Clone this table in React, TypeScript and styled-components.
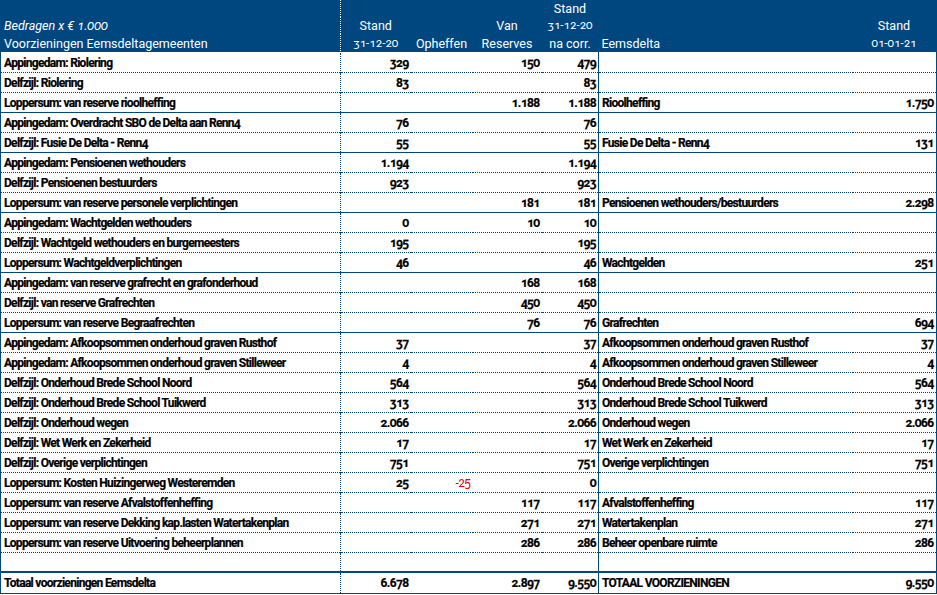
import React from 'react';
import styled, { createGlobalStyle } from 'styled-components';

const BLUE = '#00467f';

type Line = 'dot' | 'solid' | 'thick';

type Row = {
	label: string;
	stand?: string;
	opheffen?: string;
	van?: string;
	na?: string;
	eems?: string;
	eemsStand?: string;
	line: Line;
	total?: boolean;
};

const rows: Row[] = [
	{ label: 'Appingedam: Riolering', stand: '329', van: '150', na: '479', line: 'dot' },
	{ label: 'Delfzijl: Riolering', stand: '83', na: '83', line: 'dot' },
	{ label: 'Loppersum: van reserve rioolheffing', van: '1.188', na: '1.188', eems: 'Rioolheffing', eemsStand: '1.750', line: 'solid' },
	{ label: 'Appingedam: Overdracht SBO de Delta aan Renn4', stand: '76', na: '76', line: 'dot' },
	{ label: 'Delfzijl: Fusie De Delta - Renn4', stand: '55', na: '55', eems: 'Fusie De Delta - Renn4', eemsStand: '131', line: 'solid' },
	{ label: 'Appingedam: Pensioenen wethouders', stand: '1.194', na: '1.194', line: 'dot' },
	{ label: 'Delfzijl: Pensioenen bestuurders', stand: '923', na: '923', line: 'dot' },
	{ label: 'Loppersum: van reserve personele verplichtingen', van: '181', na: '181', eems: 'Pensioenen wethouders/bestuurders', eemsStand: '2.298', line: 'solid' },
	{ label: 'Appingedam: Wachtgelden wethouders', stand: '0', van: '10', na: '10', line: 'dot' },
	{ label: 'Delfzijl: Wachtgeld wethouders en burgemeesters', stand: '195', na: '195', line: 'dot' },
	{ label: 'Loppersum: Wachtgeldverplichtingen', stand: '46', na: '46', eems: 'Wachtgelden', eemsStand: '251', line: 'solid' },
	{ label: 'Appingedam: van reserve grafrecht en grafonderhoud', van: '168', na: '168', line: 'dot' },
	{ label: 'Delfzijl: van reserve Grafrechten', van: '450', na: '450', line: 'dot' },
	{ label: 'Loppersum: van reserve Begraafrechten', van: '76', na: '76', eems: 'Grafrechten', eemsStand: '694', line: 'solid' },
	{ label: 'Appingedam: Afkoopsommen onderhoud graven Rusthof', stand: '37', na: '37', eems: 'Afkoopsommen onderhoud graven Rusthof', eemsStand: '37', line: 'dot' },
	{ label: 'Appingedam: Afkoopsommen onderhoud graven Stilleweer', stand: '4', na: '4', eems: 'Afkoopsommen onderhoud graven Stilleweer', eemsStand: '4', line: 'dot' },
	{ label: 'Delfzijl: Onderhoud Brede School Noord', stand: '564', na: '564', eems: 'Onderhoud Brede School Noord', eemsStand: '564', line: 'dot' },
	{ label: 'Delfzijl: Onderhoud Brede School Tuikwerd', stand: '313', na: '313', eems: 'Onderhoud Brede School Tuikwerd', eemsStand: '313', line: 'dot' },
	{ label: 'Delfzijl: Onderhoud wegen', stand: '2.066', na: '2.066', eems: 'Onderhoud wegen', eemsStand: '2.066', line: 'dot' },
	{ label: 'Delfzijl: Wet Werk en Zekerheid', stand: '17', na: '17', eems: 'Wet Werk en Zekerheid', eemsStand: '17', line: 'dot' },
	{ label: 'Delfzijl: Overige verplichtingen', stand: '751', na: '751', eems: 'Overige verplichtingen', eemsStand: '751', line: 'dot' },
	{ label: 'Loppersum: Kosten Huizingerweg Westeremden', stand: '25', opheffen: '-25', na: '0', line: 'dot' },
	{ label: 'Loppersum: van reserve Afvalstoffenheffing', van: '117', na: '117', eems: 'Afvalstoffenheffing', eemsStand: '117', line: 'dot' },
	{ label: 'Loppersum: van reserve Dekking kap.lasten Watertakenplan', van: '271', na: '271', eems: 'Watertakenplan', eemsStand: '271', line: 'dot' },
	{ label: 'Loppersum: van reserve Uitvoering beheerplannen', van: '286', na: '286', eems: 'Beheer openbare ruimte', eemsStand: '286', line: 'dot' },
	{ label: '', line: 'thick' },
	{ label: 'Totaal voorzieningen Eemsdelta', stand: '6.678', van: '2.897', na: '9.550', eems: 'TOTAAL VOORZIENINGEN', eemsStand: '9.550', line: 'solid', total: true },
];

const lineStyle = (l: Line) =>
	l === 'dot' ? `1px dotted ${BLUE}` : l === 'thick' ? `2px solid ${BLUE}` : `1px solid ${BLUE}`;

export default function App() {
	return (
		<>
			<GlobalStyle />
			<Sheet>
				<colgroup>
					<col style={{ width: 340 }} />
					<col style={{ width: 70 }} />
					<col style={{ width: 62 }} />
					<col style={{ width: 69 }} />
					<col style={{ width: 57 }} />
					<col style={{ width: 254 }} />
					<col style={{ width: 84 }} />
				</colgroup>
				<thead>
					<HeadRow>
						<HeadCell $divider />
						<HeadCell />
						<HeadCell />
						<HeadCell />
						<HeadCell $center>Stand</HeadCell>
						<HeadCell />
						<HeadCell />
					</HeadRow>
					<HeadRow>
						<HeadCell $divider $italic>Bedragen x € 1.000</HeadCell>
						<HeadCell $center>Stand</HeadCell>
						<HeadCell />
						<HeadCell $center>Van</HeadCell>
						<HeadCell $center $date>31-12-20</HeadCell>
						<HeadCell />
						<HeadCell $center>Stand</HeadCell>
					</HeadRow>
					<HeadRow $last>
						<HeadCell $divider>Voorzieningen Eemsdeltagemeenten</HeadCell>
						<HeadCell $center $date>31-12-20</HeadCell>
						<HeadCell $center>Opheffen</HeadCell>
						<HeadCell $center>Reserves</HeadCell>
						<HeadCell $center>na corr.</HeadCell>
						<HeadCell>Eemsdelta</HeadCell>
						<HeadCell $center $date>01-01-21</HeadCell>
					</HeadRow>
				</thead>
				<tbody>
					{rows.map((r, i) => (
						<BodyRow key={i} $line={r.line} $total={r.total}>
							<LabelCell $divider>{r.label}</LabelCell>
							<NumCell>{r.stand}</NumCell>
							<NumCell $negative={!!r.opheffen}>{r.opheffen}</NumCell>
							<NumCell>{r.van}</NumCell>
							<NumCell $edge>{r.na}</NumCell>
							<LabelCell>{r.eems}</LabelCell>
							<NumCell>{r.eemsStand}</NumCell>
						</BodyRow>
					))}
				</tbody>
			</Sheet>
		</>
	);
}

// Styled Components
const GlobalStyle = createGlobalStyle`
	html, body {
		margin: 0;
		padding: 0;
		background: #ffffff;
	}
`;

const Sheet = styled.table`
	width: 936px;
	table-layout: fixed;
	border-collapse: collapse;
	border-left: 1px solid ${BLUE};
	border-right: 2px solid ${BLUE};
	font-family: Roboto, 'Liberation Sans', sans-serif;
	font-variant-numeric: oldstyle-nums;
	color: #000;
`;

const HeadRow = styled.tr<{ $last?: boolean }>`
	background: ${BLUE};
	height: ${(p) => (p.$last ? '18px' : '17px')};
	border-bottom: ${(p) => (p.$last ? '1px dotted #ffffff' : 'none')};
`;

const HeadCell = styled.th<{ $center?: boolean; $italic?: boolean; $divider?: boolean; $date?: boolean }>`
	padding: 0 3px;
	color: #ffffff;
	font-weight: 400;
	font-size: ${(p) => (p.$date ? '11.5px' : '12.5px')};
	font-style: ${(p) => (p.$italic ? 'italic' : 'normal')};
	text-align: ${(p) => (p.$center ? 'center' : 'left')};
	white-space: nowrap;
	line-height: 17px;
	vertical-align: bottom;
	border-right: ${(p) => (p.$divider ? '1px dotted #ffffff' : 'none')};
`;

const BodyRow = styled.tr<{ $line: Line; $total?: boolean }>`
	height: 20px;
	border-bottom: ${(p) => lineStyle(p.$line)};

	& > td {
		line-height: ${(p) => (p.$total ? '19px' : '18px')};
	}
`;

const LabelCell = styled.td<{ $divider?: boolean }>`
	padding: 1px 3px 0;
	font-size: 12px;
	font-weight: 700;
	letter-spacing: -0.7px;
	-webkit-text-stroke: 0.2px #000;
	white-space: nowrap;
	overflow: hidden;
	border-right: ${(p) => (p.$divider ? `1px dotted ${BLUE}` : 'none')};
`;

const NumCell = styled.td<{ $negative?: boolean; $edge?: boolean }>`
	padding: 1px 2px 0 0;
	text-align: right;
	font-size: 12px;
	font-weight: ${(p) => (p.$negative ? 400 : 700)};
	color: ${(p) => (p.$negative ? '#e00000' : '#000')};
	-webkit-text-stroke: ${(p) => (p.$negative ? '0' : '0.2px #000')};
	letter-spacing: -0.6px;
	white-space: nowrap;
	border-right: ${(p) => (p.$edge ? `1px solid ${BLUE}` : 'none')};
`;
